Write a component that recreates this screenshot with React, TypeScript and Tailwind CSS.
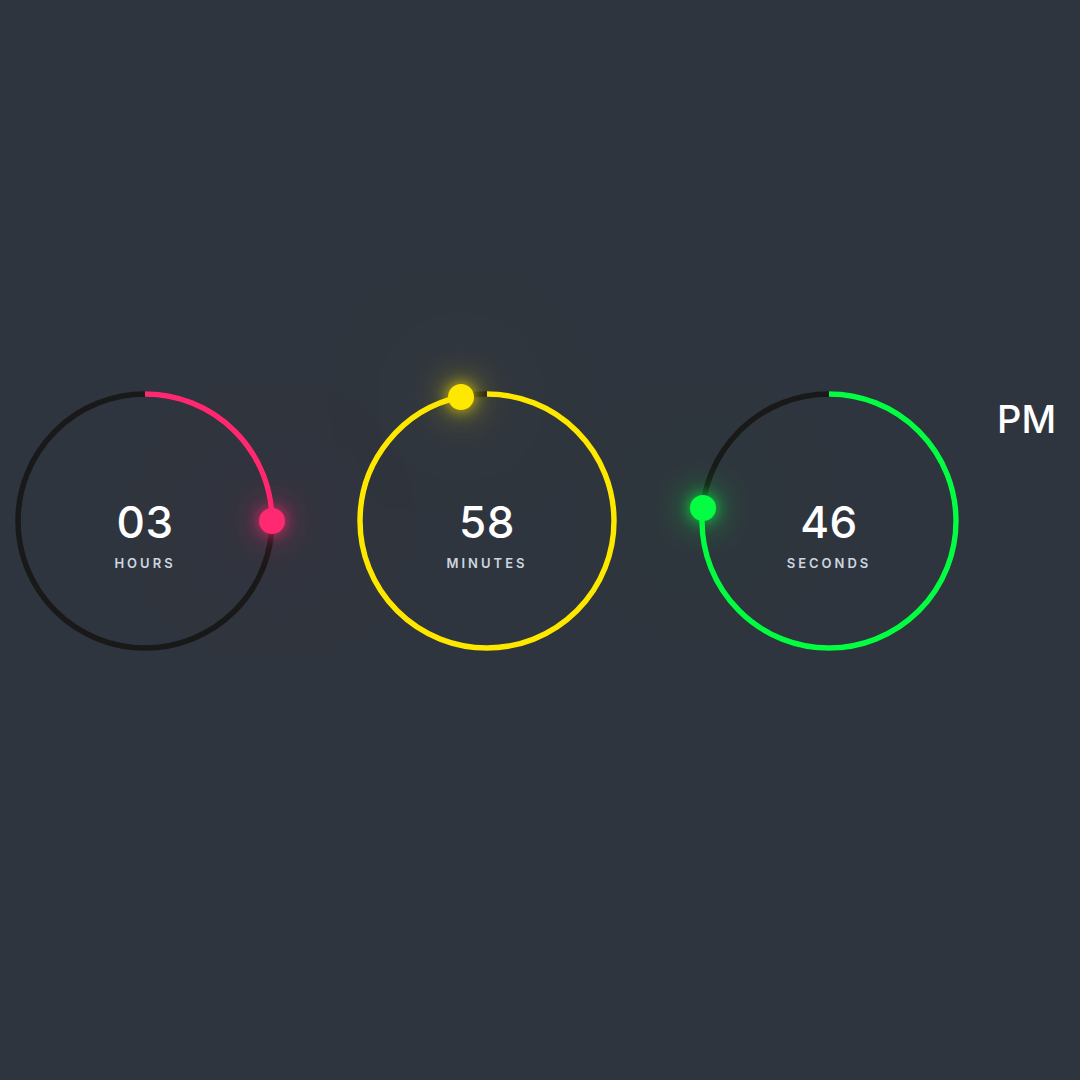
import React from "react";

type Ring = {
  value: string;
  label: string;
  fraction: number;
  color: string;
  glow: string;
  halo: string;
};

const R = 127;
const SIZE = 260;
const C = 2 * Math.PI * R;

const rings: Ring[] = [
  { value: "03", label: "HOURS", fraction: 3 / 12, color: "#ff2972", glow: "rgba(255,41,114,0.75)", halo: "rgba(255,41,114,0.07)" },
  { value: "58", label: "MINUTES", fraction: 58 / 60, color: "#fee800", glow: "rgba(254,232,0,0.75)", halo: "rgba(254,232,0,0.06)" },
  { value: "46", label: "SECONDS", fraction: 46 / 60, color: "#04fc43", glow: "rgba(4,252,67,0.75)", halo: "rgba(4,252,67,0.06)" },
];

function Dial({ ring }: { ring: Ring }) {
  const angle = ring.fraction * 2 * Math.PI;
  // dot sits on the ring at the end of the coloured arc
  const dotX = SIZE / 2 + R * Math.sin(angle);
  const dotY = SIZE / 2 - R * Math.cos(angle);

  return (
    <div className="relative w-[260px] h-[260px] shrink-0">
      <svg width={SIZE} height={SIZE} className="absolute inset-0 -rotate-90">
        <circle cx={SIZE / 2} cy={SIZE / 2} r={R} fill="none" stroke="#191919" strokeWidth={5.5} />
        <circle
          cx={SIZE / 2}
          cy={SIZE / 2}
          r={R}
          fill="none"
          stroke={ring.color}
          strokeWidth={5.5}
          strokeDasharray={C}
          strokeDashoffset={C * (1 - ring.fraction)}
        />
      </svg>
      <div
        className="absolute w-[26px] h-[26px] rounded-full -translate-x-1/2 -translate-y-1/2"
        style={{
          left: dotX,
          top: dotY,
          background: ring.color,
          boxShadow: `0 0 14px ${ring.glow}, 0 0 34px ${ring.glow}, 0 0 160px 40px ${ring.halo}`,
        }}
      />
      <div className="absolute inset-0 flex flex-col items-center justify-center pt-[28px]">
        <span className="text-[44px] leading-none font-medium text-white tracking-[0.5px]">{ring.value}</span>
        <span className="mt-[13px] text-[13px] leading-none font-semibold tracking-[3px] text-[#cdd6e0]">{ring.label}</span>
      </div>
    </div>
  );
}

export default function App() {
  return (
    <main className="w-full h-[1080px] bg-[#2f353e] overflow-hidden font-['Inter','Noto_Sans',sans-serif]">
      <div className="flex items-start pl-[15px] pt-[391px]">
        <div className="flex gap-[82px]">
          {rings.map((r) => (
            <Dial key={r.label} ring={r} />
          ))}
        </div>
        <span className="ml-[38px] mt-[9px] text-[38px] leading-none font-medium text-white">PM</span>
      </div>
    </main>
  );
}
